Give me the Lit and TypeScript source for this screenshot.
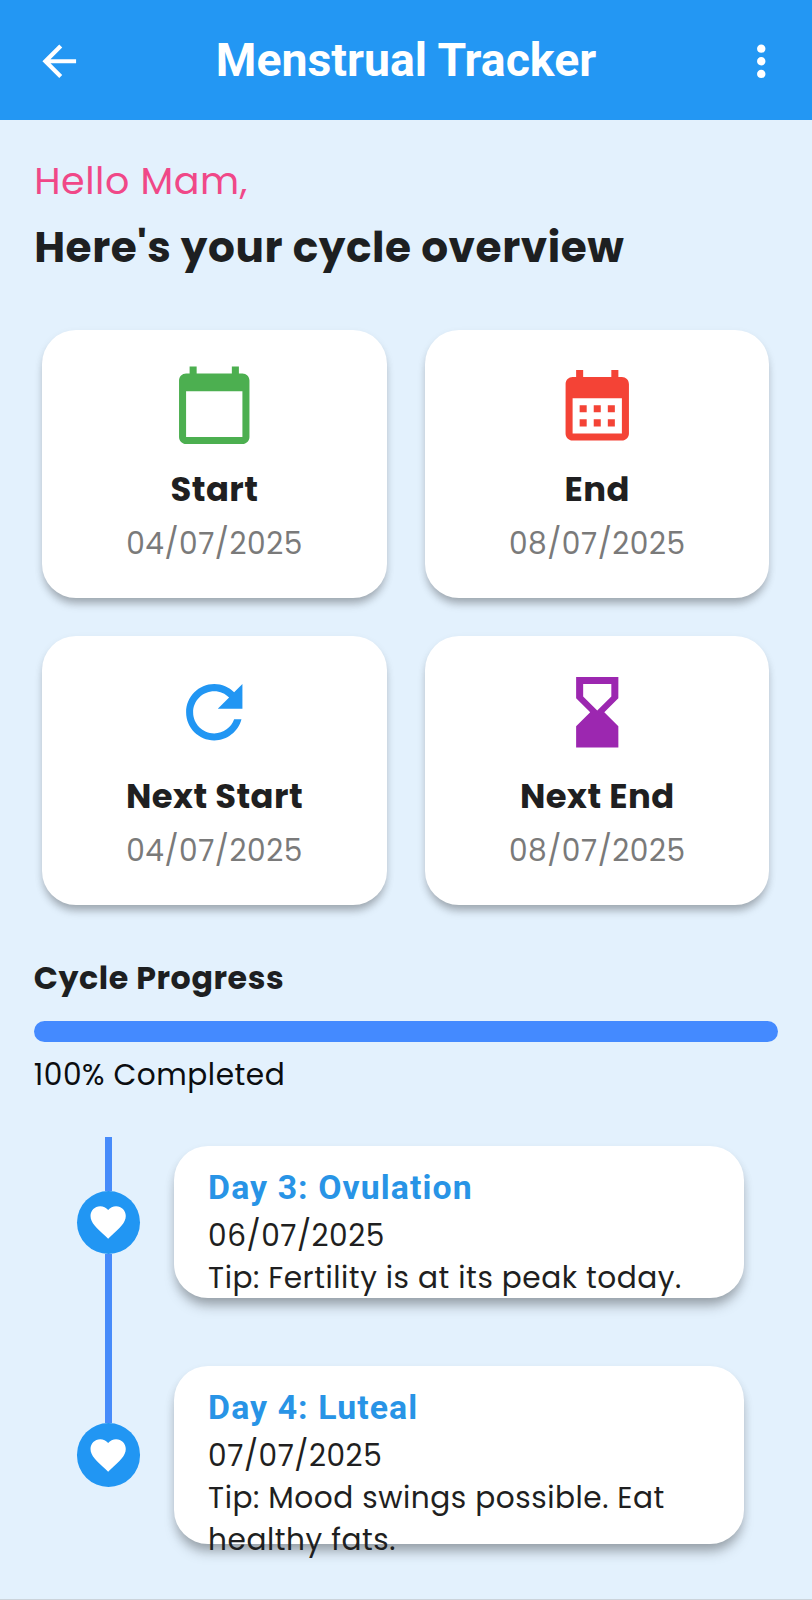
import { LitElement, html, css, svg } from "lit";
import { customElement, property } from "lit/decorators.js";
import { styleMap } from "lit/directives/style-map.js";

const ICONS = {
  back: svg`<path d="M20 11H7.83l5.59-5.59L12 4l-8 8 8 8 1.41-1.41L7.83 13H20v-2z"/>`,
  more: svg`<path d="M12 8c1.1 0 2-.9 2-2s-.9-2-2-2-2 .9-2 2 .9 2 2 2zm0 2c-1.1 0-2 .9-2 2s.9 2 2 2 2-.9 2-2-.9-2-2-2zm0 6c-1.1 0-2 .9-2 2s.9 2 2 2 2-.9 2-2-.9-2-2-2z"/>`,
  today: svg`<path d="M20 3h-1V1h-2v2H7V1H5v2H4c-1.1 0-2 .9-2 2v16c0 1.1.9 2 2 2h16c1.1 0 2-.9 2-2V5c0-1.1-.9-2-2-2zm0 18H4V8h16v13z"/>`,
  month: svg`<path d="M19 4h-1V2h-2v2H8V2H6v2H5c-1.11 0-1.99.9-1.99 2L3 20c0 1.1.89 2 2 2h14c1.1 0 2-.9 2-2V6c0-1.1-.9-2-2-2zm0 16H5V10h14v10zM9 14H7v-2h2v2zm4 0h-2v-2h2v2zm4 0h-2v-2h2v2zm-8 4H7v-2h2v2zm4 0h-2v-2h2v2zm4 0h-2v-2h2v2z"/>`,
  refresh: svg`<path d="M17.65 6.35C16.2 4.9 14.21 4 12 4c-4.42 0-7.99 3.58-7.99 8s3.57 8 7.99 8c3.73 0 6.84-2.55 7.73-6h-2.08c-.82 2.33-3.04 4-5.65 4-3.31 0-6-2.69-6-6s2.69-6 6-6c1.66 0 3.14.69 4.22 1.78L13 11h7V4l-2.35 2.35z"/>`,
  hourglass: svg`<path d="M18 22l-.01-6L14 12l3.99-4.01L18 2H6v6l4 4-4 3.99V22h12zM8 7.5V4h8v3.5l-4 4-4-4z"/>`,
  heart: svg`<path d="M12 21.35l-1.45-1.32C5.4 15.36 2 12.28 2 8.5 2 5.42 4.42 3 7.5 3c1.74 0 3.41.81 4.5 2.09C13.09 3.81 14.76 3 16.5 3 19.58 3 22 5.42 22 8.5c0 3.78-3.4 6.86-8.55 11.54L12 21.35z"/>`,
};
type IconName = keyof typeof ICONS;

@customElement("app-icon")
class AppIcon extends LitElement {
  @property() name: IconName = "heart";
  static styles = css`
    :host { display: block; flex: none; }
    svg { display: block; width: 100%; height: 100%; fill: currentColor; }
  `;
  render() {
    return html`<svg viewBox="0 0 24 24" aria-hidden="true">${ICONS[this.name]}</svg>`;
  }
}

@customElement("date-card")
class DateCard extends LitElement {
  @property() icon: IconName = "today";
  @property() tint = "#000";
  @property() label = "";
  @property() date = "";
  static styles = css`
    :host {
      display: flex; flex-direction: column; align-items: center; box-sizing: border-box;
      height: 268.4px; padding-top: 33.4px; border-radius: 34px; background: #fff;
      box-shadow: 0 8px 10px -3px rgba(0, 0, 0, .25), 0 4px 8px rgba(0, 0, 0, .1);
    }
    .icon { width: 84.5px; height: 84.5px; }
    .label { margin-top: 17.8px; font-size: 33.8px; line-height: 50px; font-weight: 700; letter-spacing: .45px; color: #1f1f21; white-space: nowrap; }
    .date { margin-top: 7px; font-size: 29.6px; line-height: 44px; letter-spacing: .53px; color: #7a7a7a; }
  `;
  render() {
    return html`
      <app-icon class="icon" name=${this.icon} style=${styleMap({ color: this.tint })}></app-icon>
      <div class="label">${this.label}</div>
      <div class="date">${this.date}</div>
    `;
  }
}

@customElement("day-card")
class DayCard extends LitElement {
  @property() heading = "";
  @property() date = "";
  @property() tip = "";
  static styles = css`
    :host {
      display: block; box-sizing: border-box; padding: 22px 34px 0 34.5px;
      border-radius: 34px; background: #fff; color: #1f1f21;
      box-shadow: 0 11px 14px -4px rgba(0, 0, 0, .27), 0 5px 10px rgba(0, 0, 0, .12);
    }
    .heading { font: 700 33.8px/40px Roboto, sans-serif; letter-spacing: 1.08px; color: #2894e6; }
    .text { font-size: 29.6px; line-height: 42.3px; letter-spacing: .53px; }
    .date { margin-top: 6.7px; }
  `;
  render() {
    return html`
      <div class="heading">${this.heading}</div>
      <div class="text date">${this.date}</div>
      <div class="text">Tip: ${this.tip}</div>
    `;
  }
}

@customElement("app-root")
class AppRoot extends LitElement {
  static styles = css`
    :host {
      display: block; box-sizing: border-box; width: 812px; height: 1600px; overflow: hidden;
      background: #e3f1fd; border-bottom: 1px solid #cbd3da;
      font-family: Poppins, Inter, sans-serif; color: #1d1f21;
    }
    .bar {
      display: grid; grid-template-columns: 60px 1fr 60px; align-items: center; justify-items: center;
      box-sizing: border-box; height: 120px; padding: 3px 20.5px 0 29.5px; background: #2397f3; color: #fff;
    }
    .bar app-icon { width: 50.5px; height: 50.5px; }
    .title { margin: 0; padding: 0 9px 3px 0; font: 700 46.4px/56px Roboto, sans-serif; white-space: nowrap; }
    .intro { padding: 32px 33.8px 0 34.2px; }
    .hello { font-size: 38px; line-height: 57px; letter-spacing: .55px; color: #f04888; }
    .overview { margin: 7px 0 0; font-size: 42.2px; line-height: 64px; font-weight: 700; letter-spacing: .57px; }
    .cards { display: grid; grid-template-columns: 344.4px 344.4px; gap: 38.3px 38.4px; padding: 49.6px 0 0 42.3px; }
    .progress { padding: 49.5px 33.8px 0; }
    .progress-title { margin: 0; font-size: 31.7px; line-height: 48px; font-weight: 700; letter-spacing: .57px; }
    .track { margin-top: 19px; height: 21.2px; border-radius: 10.6px; background: #c9dcf8; overflow: hidden; }
    .fill { height: 100%; background: #448aff; }
    .done { margin-top: 11px; font-size: 29.6px; line-height: 44px; letter-spacing: .53px; color: #0b0d10; }
    .timeline { display: flex; gap: 33.5px; padding: 40px 0 0 76.5px; }
    .rail { display: flex; flex-direction: column; align-items: center; width: 63.6px; }
    .line { width: 6.5px; background: #478bfa; }
    .lead { height: 53.2px; }
    .link { height: 169.2px; }
    .dot { display: flex; align-items: center; justify-content: center; flex: none; width: 63.6px; height: 63.6px; border-radius: 50%; background: #2196f3; color: #fff; }
    .dot app-icon { width: 42.3px; height: 42.3px; }
    .days { display: flex; flex-direction: column; gap: 67.7px; width: 570.4px; padding-top: 8.8px; }
    .short { height: 152.3px; }
    .tall { height: 177.7px; }
  `;
  render() {
    const percent = 100;
    return html`
      <header class="bar">
        <app-icon name="back"></app-icon>
        <h1 class="title">Menstrual Tracker</h1>
        <app-icon name="more"></app-icon>
      </header>
      <section class="intro">
        <div class="hello">Hello Mam,</div>
        <h2 class="overview">Here's your cycle overview</h2>
      </section>
      <section class="cards">
        <date-card icon="today" tint="#4caf50" label="Start" date="04/07/2025"></date-card>
        <date-card icon="month" tint="#f44336" label="End" date="08/07/2025"></date-card>
        <date-card icon="refresh" tint="#2196f3" label="Next Start" date="04/07/2025"></date-card>
        <date-card icon="hourglass" tint="#9c27b0" label="Next End" date="08/07/2025"></date-card>
      </section>
      <section class="progress">
        <h3 class="progress-title">Cycle Progress</h3>
        <div class="track"><div class="fill" style=${styleMap({ width: `${percent}%` })}></div></div>
        <div class="done">${percent}% Completed</div>
      </section>
      <section class="timeline">
        <div class="rail">
          <div class="line lead"></div>
          <div class="dot"><app-icon name="heart"></app-icon></div>
          <div class="line link"></div>
          <div class="dot"><app-icon name="heart"></app-icon></div>
        </div>
        <div class="days">
          <day-card class="short" heading="Day 3: Ovulation" date="06/07/2025" tip="Fertility is at its peak today."></day-card>
          <day-card class="tall" heading="Day 4: Luteal" date="07/07/2025" tip="Mood swings possible. Eat healthy fats."></day-card>
        </div>
      </section>
    `;
  }
}
